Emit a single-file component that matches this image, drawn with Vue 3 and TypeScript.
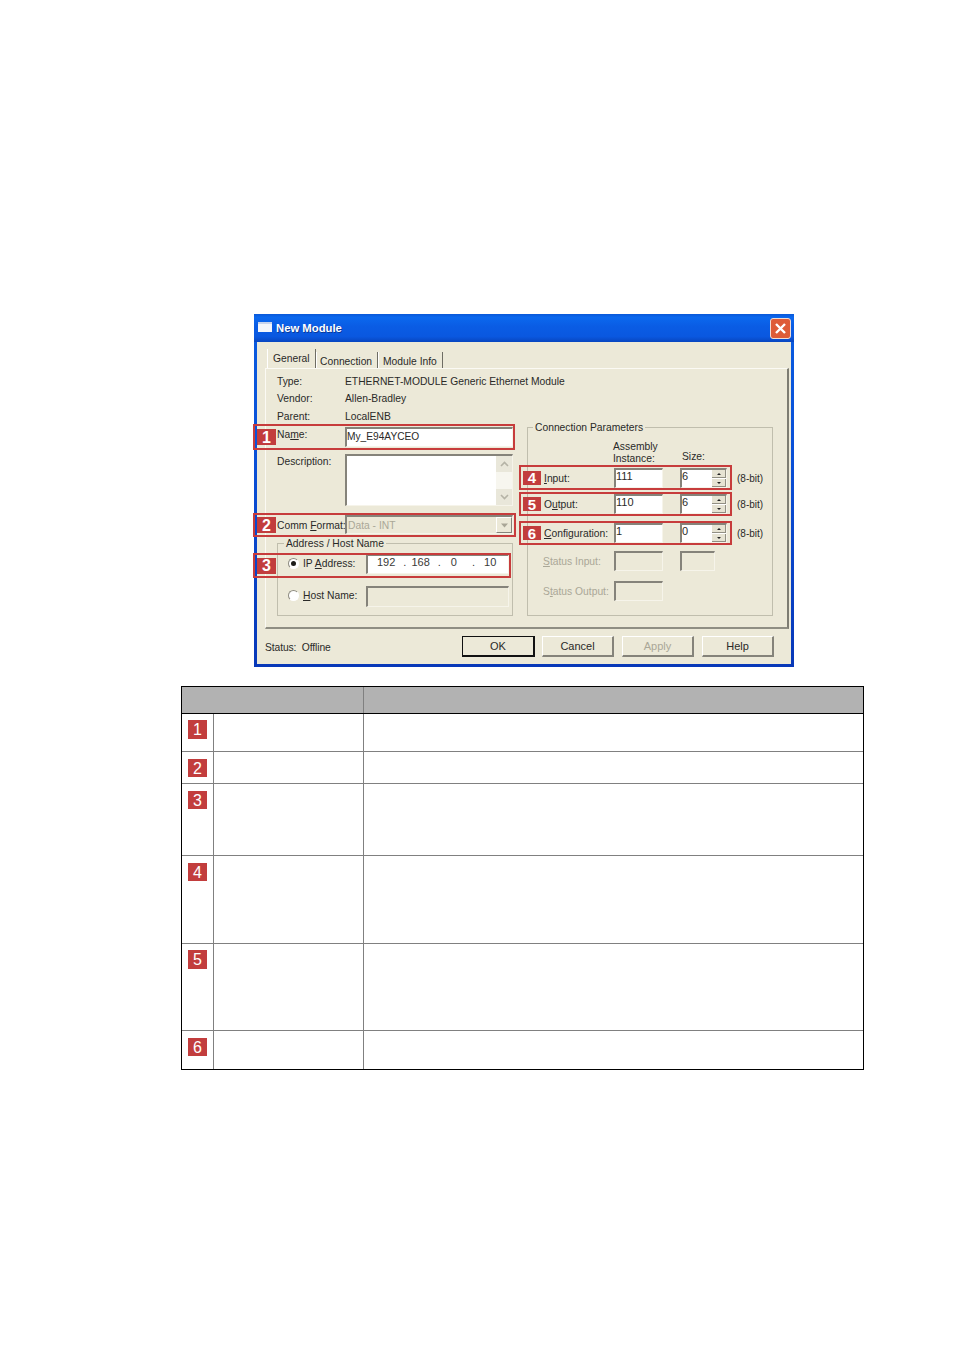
<script setup lang="ts">
interface Row { id: string; cls: string }
const highlights = [
  { n: 1, cls: 'h1' }, { n: 2, cls: 'h2' }, { n: 3, cls: 'h3' },
  { n: 4, cls: 'h4' }, { n: 5, cls: 'h5' }, { n: 6, cls: 'h6' },
]
const rows: Row[] = [
  { id: '1', cls: 'r1' }, { id: '2', cls: 'r2' }, { id: '3', cls: 'r3' },
  { id: '4', cls: 'r4' }, { id: '5', cls: 'r5' }, { id: '6', cls: 'r6' },
]
</script>

<template>
  <div class="page">
    <section class="dialog">
      <header class="titlebar">
        <span class="win-icon"></span>
        <span class="title">New Module</span>
        <span class="close">
          <svg width="13" height="13" viewBox="0 0 13 13"><path d="M2 2 L11 11 M11 2 L2 11" stroke="#fff" stroke-width="2.4" fill="none"/></svg>
        </span>
      </header>
      <div class="client">
        <nav class="tabs">
          <span class="tab active">General</span>
          <span class="tab conn">Connection</span>
          <span class="tab info">Module Info</span>
        </nav>
        <div class="panel">
          <div class="left">
            <div class="kv"><span class="k">Type:</span><span class="v">ETHERNET-MODULE Generic Ethernet Module</span></div>
            <div class="kv"><span class="k">Vendor:</span><span class="v">Allen-Bradley</span></div>
            <div class="kv"><span class="k">Parent:</span><span class="v">LocalENB</span></div>
            <div class="field-row name-row">
              <span class="k">Na<u>m</u>e:</span>
              <span class="field grow">My_E94AYCEO</span>
            </div>
            <div class="field-row desc-row">
              <span class="k">Description:</span>
              <span class="field grow desc">
                <span class="scroll">
                  <span class="sbtn"><svg width="9" height="6" viewBox="0 0 9 6"><path d="M1 5 L4.5 1.5 L8 5" stroke="#b5b3a6" stroke-width="1.6" fill="none"/></svg></span>
                  <span class="sbtn"><svg width="9" height="6" viewBox="0 0 9 6"><path d="M1 1 L4.5 4.5 L8 1" stroke="#b5b3a6" stroke-width="1.6" fill="none"/></svg></span>
                </span>
              </span>
            </div>
            <div class="field-row comm-row">
              <span class="k comm-k">Comm <u>F</u>ormat:</span>
              <span class="field grow off combo">
                <span class="dis">Data - INT</span>
                <span class="drop"><svg width="9" height="5" viewBox="0 0 9 5"><path d="M1 0.5 H8 L4.5 4.5 Z" fill="#a9a696"/></svg></span>
              </span>
            </div>
            <div class="group addr">
              <span class="legend">Address / Host Name</span>
              <div class="radio-row">
                <span class="radio on"></span>
                <span class="radio-label">IP <u>A</u>ddress:</span>
                <span class="field ip"><span>192</span><span>.</span><span>168</span><span>.</span><span>0</span><span>.</span><span>10</span></span>
              </div>
              <div class="radio-row host">
                <span class="radio"></span>
                <span class="radio-label"><u>H</u>ost Name:</span>
                <span class="field ip off"></span>
              </div>
            </div>
          </div>
          <div class="group cp">
            <span class="legend">Connection Parameters</span>
            <div class="cp-row cp-head">
              <span></span>
              <span class="lines">Assembly<br />Instance:</span>
              <span class="size-head">Size:</span>
            </div>
            <div class="cp-row">
              <span class="lab"><u>I</u>nput:</span><span class="field">111</span>
              <span class="field spin">6<span class="spinner"><i class="up"></i><i class="down"></i></span></span><span class="bit">(8-bit)</span>
            </div>
            <div class="cp-row">
              <span class="lab">O<u>u</u>tput:</span><span class="field">110</span>
              <span class="field spin">6<span class="spinner"><i class="up"></i><i class="down"></i></span></span><span class="bit">(8-bit)</span>
            </div>
            <div class="cp-row">
              <span class="lab"><u>C</u>onfiguration:</span><span class="field">1</span>
              <span class="field spin">0<span class="spinner"><i class="up"></i><i class="down"></i></span></span><span class="bit">(8-bit)</span>
            </div>
            <div class="cp-row">
              <span class="lab dis"><u>S</u>tatus Input:</span><span class="field off"></span>
              <span class="field off small"></span>
            </div>
            <div class="cp-row">
              <span class="lab dis">S<u>t</u>atus Output:</span><span class="field off"></span>
            </div>
          </div>
        </div>
        <footer class="footer">
          <span class="status">Status:&nbsp; Offline</span>
          <span class="buttons">
            <span class="btn def">OK</span>
            <span class="btn">Cancel</span>
            <span class="btn dis">Apply</span>
            <span class="btn">Help</span>
          </span>
        </footer>
      </div>
      <div v-for="h in highlights" :key="h.n" class="hl" :class="h.cls">
        <span class="hl-badge">{{ h.n }}</span>
      </div>
    </section>

    <div class="table">
      <div class="thead"><div class="th first"></div><div class="th"></div></div>
      <div v-for="r in rows" :key="r.id" class="tr" :class="r.cls">
        <div class="td num"><span class="badge">{{ r.id }}</span></div>
        <div class="td mid"></div>
        <div class="td"></div>
      </div>
    </div>
  </div>
</template>

<style scoped>
.page {
  width: 954px;
  height: 1350px;
  box-sizing: border-box;
  padding-top: 314px;
  background: #fff;
  overflow: hidden;
  font-family: "Liberation Sans", Arial, sans-serif;
}
.dialog {
  position: relative;
  width: 540px;
  height: 353px;
  margin-left: 254px;
  box-sizing: border-box;
  padding: 0 3px 3px;
  background: linear-gradient(#0a5ce0, #0a50d8 40%, #0838b8);
  color: #2a2a28;
  font-size: 10.3px;
  line-height: 13px;
}
.titlebar {
  height: 28px;
  margin: 0 -3px;
  padding: 0 3px 0 4px;
  display: flex;
  align-items: center;
  background: linear-gradient(#0a58d8 0%, #0b68ee 12%, #0a5ce4 45%, #0a58e0 80%, #0846c0 100%);
}
.win-icon {
  width: 14px;
  height: 10px;
  background: #f4f6fb;
  border-top: 2px solid #c8d4ec;
  box-sizing: border-box;
  margin-top: -2px;
}
.title {
  margin-left: 4px;
  color: #fff;
  font-weight: 700;
  font-size: 11.3px;
  text-shadow: 1px 1px 0 #0a3a9a;
}
.close {
  margin-left: auto;
  width: 21px;
  height: 21px;
  box-sizing: border-box;
  border: 1px solid #f2dcd2;
  border-radius: 3px;
  background: #de5c38;
  display: flex;
  align-items: center;
  justify-content: center;
}
.client {
  height: 322px;
  background: #ece9d8;
  padding-top: 7px;
  box-sizing: border-box;
}
.tabs {
  height: 19px;
  display: flex;
  align-items: flex-end;
  padding-left: 10px;
}
.tab {
  box-sizing: border-box;
  height: 16px;
  padding-left: 3px;
  border-left: 1px solid #fff;
  border-right: 1px solid #6e6d64;
  line-height: 20px;
  white-space: nowrap;
}
.tab.active { height: 19px; width: 49px; padding-left: 5px; line-height: 20px; }
.tab.conn { width: 62px; }
.tab.info { width: 65px; padding-left: 4px; }
.panel {
  margin-left: 8px;
  width: 524px;
  height: 261px;
  box-sizing: border-box;
  border-top: 1px solid #fbfaf4;
  border-left: 1px solid #fbfaf4;
  border-right: 2px solid #7d7c72;
  border-bottom: 2px solid #8f8e83;
  padding-left: 11px;
  display: flex;
}
.left { width: 236px; padding-top: 3.5px; }
.kv { height: 17.5px; display: flex; align-items: center; }
.k { width: 68px; flex: none; }
.v { white-space: nowrap; }
.comm-k { white-space: nowrap; }
.field-row { display: flex; }
.name-row { margin-top: 2px; height: 20px; }
.name-row .k, .desc-row .k, .comm-row .k { padding-top: 1px; }
.desc-row { margin-top: 7px; height: 52px; }
.comm-row { margin-top: 9px; height: 19px; align-items: center; }
.field {
  box-sizing: border-box;
  display: block;
  height: 20px;
  border-top: 2px solid #85837a;
  border-left: 2px solid #85837a;
  border-right: 1px solid #f6f4ea;
  border-bottom: 1px solid #f6f4ea;
  background: #fff;
  padding-left: 0;
  line-height: 13px;
  position: relative;
}
.grow { flex: 1; }
.name-row .field { padding-top: 1px; font-size: 10.2px; }
.desc { height: 52px; display: flex; justify-content: flex-end; }
.scroll {
  width: 16px;
  display: flex;
  flex-direction: column;
  justify-content: space-between;
  background: #f7f6ef;
}
.sbtn {
  height: 16px;
  background: #e9e7da;
  display: flex;
  align-items: center;
  justify-content: center;
}
.off { background: #ece9d8; }
.combo { height: 19px; display: flex; justify-content: space-between; align-items: center; padding-left: 1px; }
.dis { color: #aaa797; }
.drop {
  width: 16px;
  height: 16px;
  background: #ece9d8;
  border-left: 1px solid #fff;
  border-top: 1px solid #fff;
  border-right: 1px solid #85837a;
  border-bottom: 1px solid #85837a;
  box-sizing: border-box;
  display: flex;
  align-items: center;
  justify-content: center;
}
.group {
  position: relative;
  box-sizing: border-box;
  border: 1px solid #c0bead;
}
.legend {
  position: absolute;
  top: -7px;
  background: #ece9d8;
  padding: 0 2px;
  white-space: nowrap;
}
.addr {
  margin-top: 9px;
  height: 73px;
  padding: 10px 3px 0 10px;
}
.addr .legend { left: 6px; }
.radio-row { display: flex; align-items: center; height: 20px; }
.radio-row.host { margin-top: 12px; height: 21px; }
.radio {
  width: 11px;
  height: 11px;
  box-sizing: border-box;
  border-radius: 50%;
  border: 1px solid #8d8b80;
  border-right-color: #fff;
  border-bottom-color: #fff;
  background: #fff;
  flex: none;
  margin-top: -1px;
  position: relative;
}
.host .radio { margin-top: -3px; }
.radio.on::after {
  content: "";
  position: absolute;
  left: 2px;
  top: 2px;
  width: 5px;
  height: 5px;
  border-radius: 50%;
  background: #1d1d1a;
}
.radio-label { width: 63px; margin-left: 4px; white-space: nowrap; margin-top: -1px; }
.host .radio-label { margin-top: -3px; }
.ip {
  width: 143px;
  flex: none;
  display: flex;
  padding: 0 0 0 9px;
  color: #3a3a38;
  font-size: 11px;
}
.ip span:nth-child(2) { margin-left: 8px; }
.ip span:nth-child(3) { margin-left: 5px; }
.ip span:nth-child(4) { margin-left: 8px; }
.ip span:nth-child(5) { margin-left: 10px; }
.ip span:nth-child(6) { margin-left: 15px; }
.ip span:nth-child(7) { margin-left: 9px; }
.ip.off { height: 21px; padding: 0; }
.cp {
  margin-top: 58px;
  margin-left: 14px;
  width: 246px;
  height: 189px;
}
.cp .legend { left: 5px; }
.cp-row {
  display: grid;
  grid-template-columns: 86px 49px 17px 47px 10px auto;
  height: 20px;
  align-items: center;
  margin-top: 6px;
}
.cp-row > .field { grid-row: 1; }
.cp-row > .field:nth-child(2) { grid-column: 2; }
.cp-row > .field:nth-child(3) { grid-column: 4; }
.cp-row > .bit { grid-column: 6; font-size: 10px; padding-top: 1px; white-space: nowrap; }
.cp-row .field { font-size: 11px; }
.cp-head { height: 37px; margin-top: 0; align-items: end; }
.cp-head > .lines { grid-column: 2 / span 2; line-height: 12px; white-space: nowrap; margin-left: -1px; }
.cp-head > .size-head { grid-column: 4; margin-left: 2px; padding-bottom: 2px; }
.cp-row:nth-of-type(2) { margin-top: 3px; }
.cp-row:nth-of-type(4) { margin-top: 9px; }
.cp-row:nth-of-type(5) { margin-top: 8px; }
.cp-row:nth-of-type(6) { margin-top: 10px; }
.lab { padding-left: 16px; white-space: nowrap; padding-top: 1px; }
.cp-row .lab.dis { padding-top: 0; padding-left: 15px; }
.small { width: 35px; }
.spinner {
  position: absolute;
  right: 0;
  top: 0;
  width: 14px;
  height: 17px;
  display: flex;
  flex-direction: column;
  gap: 1px;
}
.spinner i {
  flex: 1;
  background: #e6e3d3;
  border-bottom: 1px solid #918f83;
  border-right: 1px solid #918f83;
  box-sizing: border-box;
  display: flex;
  align-items: center;
  justify-content: center;
}
.spinner i::before {
  content: "";
  border-left: 2px solid transparent;
  border-right: 2px solid transparent;
}
.spinner .up::before { border-bottom: 2px solid #222; }
.spinner .down::before { border-top: 2px solid #222; }
.footer {
  height: 36px;
  display: flex;
  align-items: flex-start;
  padding-left: 8px;
}
.status { margin-top: 12px; letter-spacing: -0.1px; }
.buttons {
  margin-left: auto;
  margin-right: 17px;
  margin-top: 7px;
  display: flex;
  gap: 8px;
}
.btn {
  box-sizing: border-box;
  width: 72px;
  height: 21px;
  display: flex;
  align-items: center;
  justify-content: center;
  border-top: 1px solid #fff;
  border-left: 1px solid #fff;
  border-right: 2px solid #85837a;
  border-bottom: 2px solid #85837a;
  font-size: 11px;
}
.btn.def { width: 73px; margin-right: -1px; border: 2px solid #111; border-width: 1px 2px 2px 1px; }
.hl {
  position: absolute;
  box-sizing: border-box;
  border: 2px solid #c73c3c;
  display: flex;
  align-items: center;
}
.hl-badge {
  background: #c23d3d;
  color: #fff;
  font-size: 16px;
  font-weight: 700;
  line-height: 17px;
  height: 16px;
  display: flex;
  align-items: center;
  justify-content: center;
}
.h1 { left: -1px; top: 110px; width: 262px; height: 26px; padding-left: 1px; }
.h2 { left: -1px; top: 199px; width: 263px; height: 24px; padding-left: 1px; }
.h3 { left: -1px; top: 239px; width: 258px; height: 25px; padding-left: 1px; }
.h4 { left: 265px; top: 151px; width: 213px; height: 25px; padding-left: 2px; }
.h5 { left: 265px; top: 178px; width: 213px; height: 24px; padding-left: 2px; }
.h6 { left: 265px; top: 207px; width: 213px; height: 24px; padding-left: 2px; }
.h1 .hl-badge, .h2 .hl-badge, .h3 .hl-badge { width: 19px; margin-left: 1px; }
.h4 .hl-badge, .h5 .hl-badge, .h6 .hl-badge { width: 18px; height: 14px; font-size: 15px; }
.table {
  margin-left: 181px;
  margin-top: 19px;
  width: 683px;
  box-sizing: border-box;
  border: 1px solid #000;
}
.thead {
  height: 27px;
  box-sizing: border-box;
  display: flex;
  background: #b2b2b2;
  border-bottom: 1px solid #000;
}
.th { flex: 1; }
.th.first { flex: none; width: 182px; box-sizing: border-box; border-right: 1px solid #808080; }
.tr { display: flex; box-sizing: border-box; border-bottom: 1px solid #808080; }
.tr:last-child { border-bottom: 0; }
.r1 { height: 38px; }
.r2 { height: 32px; }
.r3 { height: 72px; }
.r4 { height: 88px; }
.r5 { height: 87px; }
.r6 { height: 38px; }
.td { flex: 1; }
.td.num { flex: none; width: 32px; box-sizing: border-box; border-right: 1px solid #808080; padding: 6px 0 0 6px; }
.td.mid { flex: none; width: 150px; box-sizing: border-box; border-right: 1px solid #808080; }
.badge {
  width: 19px;
  height: 18px;
  background: #c23d3d;
  color: #fff;
  font-size: 16px;
  line-height: 19px;
  display: block;
  text-align: center;
}
.r1 .badge, .r5 .badge { height: 19px; line-height: 20px; }
.r2 .num, .r3 .num, .r4 .num, .r6 .num { padding-top: 7px; }
</style>
